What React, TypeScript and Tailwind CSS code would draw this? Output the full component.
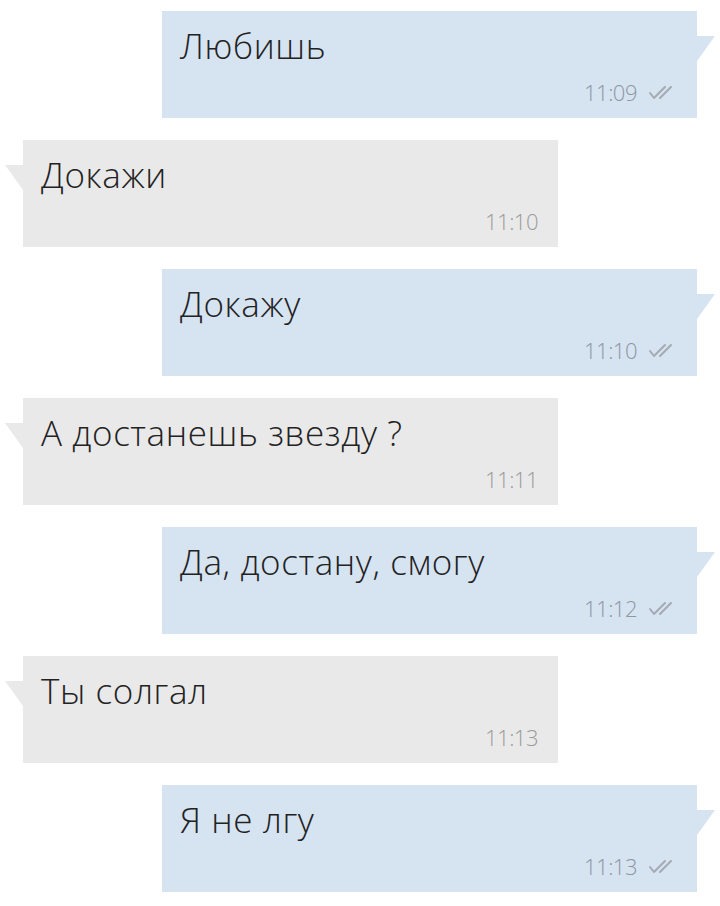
import React from 'react';

type Msg = { text: string; time: string; out: boolean };

const messages: Msg[] = [
  { text: 'Любишь', time: '11:09', out: true },
  { text: 'Докажи', time: '11:10', out: false },
  { text: 'Докажу', time: '11:10', out: true },
  { text: 'А достанешь звезду ?', time: '11:11', out: false },
  { text: 'Да, достану, смогу', time: '11:12', out: true },
  { text: 'Ты солгал', time: '11:13', out: false },
  { text: 'Я не лгу', time: '11:13', out: true },
];

function Ticks() {
  return (
    <svg width="30" height="16" viewBox="0 0 30 16" className="ml-[10px] mt-[2px]" aria-hidden>
      <path d="M3 8 L7 13 L18 2 M13 13 L24 2" fill="none" stroke="#a3aab3" strokeWidth="2" strokeLinecap="round" strokeLinejoin="round" />
    </svg>
  );
}

function Bubble({ msg }: { msg: Msg }) {
  // tail sits near the top, pointing away from the bubble
  const tail = msg.out ? (
    <div className="absolute right-[-18px] top-[25px] h-0 w-0 border-r-[18px] border-t-[25px] border-r-transparent border-t-[#d6e3f1]" />
  ) : (
    <div className="absolute left-[-18px] top-[25px] h-0 w-0 border-l-[18px] border-t-[25px] border-l-transparent border-t-[#e9e9e9]" />
  );
  return (
    <div
      className={
        'relative h-[107px] w-[535px] ' +
        (msg.out ? 'ml-[162px] bg-[#d6e3f1]' : 'ml-[23px] bg-[#e9e9e9]')
      }
    >
      {tail}
      <div className="flex h-full flex-col pl-[18px] pr-[20px] pt-[13px]">
        <div className="text-[35px] font-light leading-[44px] tracking-[0.6px] text-[#222]">{msg.text}</div>
        <div className="mt-[11px] flex items-center justify-end">
          <span className={'text-[22px] font-light leading-[26px] tracking-[-0.5px] ' + (msg.out ? 'text-[#8d96a1]' : 'text-[#9b9b9b]')}>
            {msg.time}
          </span>
          {msg.out && <Ticks />}
        </div>
      </div>
    </div>
  );
}

export default function App() {
  return (
    <div
      className="flex min-h-[906px] w-[720px] flex-col gap-[22px] bg-white pt-[11px]"
      style={{ fontFamily: '"Open Sans", "Noto Sans", sans-serif' }}
    >
      {messages.map((m, i) => (
        <Bubble key={i} msg={m} />
      ))}
    </div>
  );
}
